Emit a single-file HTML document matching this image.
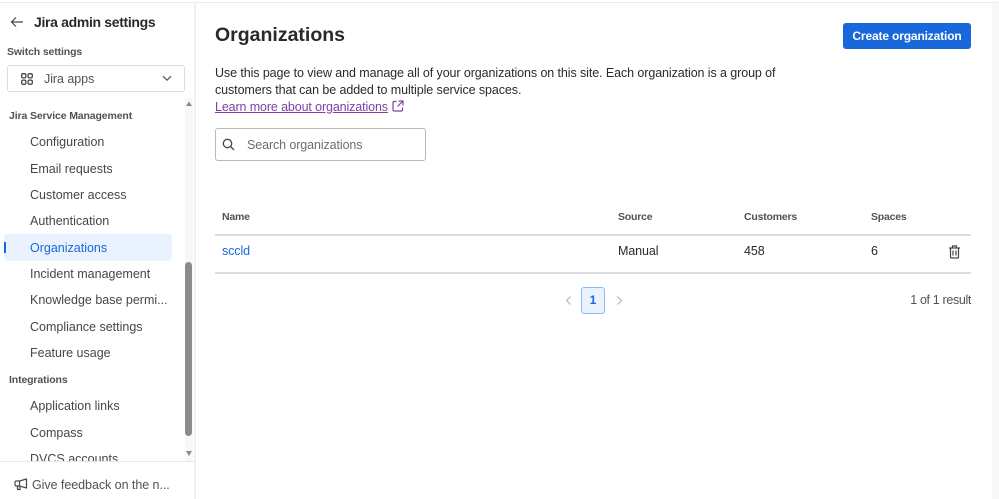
<!DOCTYPE html>
<html><head><meta charset="utf-8">
<style>
html,body{margin:0;padding:0;background:#fff}
#p{position:relative;width:999px;height:499px;overflow:hidden;background:#fff;font-family:"Liberation Sans",sans-serif;color:#292a2e}
.t{position:absolute;white-space:nowrap;font-size:12.5px;line-height:16px}
.n{left:30px;color:#44464c;font-size:12.5px;letter-spacing:0}
.h{color:#505258;font-size:10.5px;font-weight:700;letter-spacing:-.13px}
.th{top:209px;color:#505258;font-size:10.5px;font-weight:700;letter-spacing:-.2px}
.d{top:243px;letter-spacing:-.1px}
.b{position:absolute}
svg{position:absolute;overflow:visible}
</style></head><body><div id="p">
<div class="b" style="left:0;top:2px;width:999px;height:1px;background:#ececee"></div>
<div class="b" style="left:992px;top:3px;width:7px;height:496px;background:#f8f8f8"></div>
<div class="b" style="left:194px;top:3px;width:2px;height:496px;background:#f1f1f3"></div>

<svg style="left:10px;top:15px" width="14" height="14" viewBox="0 0 14 14" fill="none" stroke="#44464c" stroke-width="1.2"><path d="M1.500 7H13M6 2.500 1.500 7 6 11.500"/></svg>
<div class="t" style="left:34px;top:13px;font-size:14px;line-height:18px;font-weight:700;letter-spacing:-.33px;color:#292a2e">Jira admin settings</div>
<div class="t h" style="left:7px;top:44px">Switch settings</div>
<div class="b" style="left:7px;top:65px;width:176px;height:25px;border:1px solid #dcdde0;border-radius:3px"></div>
<svg style="left:21px;top:73px" width="12" height="12" viewBox="0 0 12 12" fill="none" stroke="#44464c" stroke-width="1.300"><rect x=".7" y=".7" width="4.200" height="4.200" rx="1.400"/><rect x="7.100" y=".7" width="4.200" height="4.200" rx="1.400"/><rect x=".7" y="7.100" width="4.200" height="4.200" rx="1.400"/><rect x="7.100" y="7.100" width="4.200" height="4.200" rx="1.400"/></svg>
<div class="t" style="left:44px;top:71px;color:#505258;letter-spacing:-.05px">Jira apps</div>
<svg style="left:162px;top:75px" width="10" height="7" viewBox="0 0 10 7" fill="none" stroke="#505258" stroke-width="1.200"><path d="M1 1.200 5 5.200 9 1.200"/></svg>

<div class="b" style="left:185px;top:98px;width:8px;height:364px;background:#f8f8f8"></div>
<svg style="left:185px;top:100px" width="8" height="6"><path d="M1 6 4 1.500 7 6Z" fill="#8a8a8a"/></svg>
<div class="b" style="left:185px;top:262px;width:7px;height:174px;border-radius:4px;background:#8b8b8b"></div>
<svg style="left:185px;top:451px" width="8" height="6"><path d="M1 0H7L4 5Z" fill="#8a8a8a"/></svg>

<div class="t h" style="left:9px;top:108px">Jira Service Management</div>
<div class="t n" style="top:134px">Configuration</div>
<div class="t n" style="top:161px">Email requests</div>
<div class="t n" style="top:187px">Customer access</div>
<div class="t n" style="top:213px">Authentication</div>
<div class="b" style="left:4px;top:234px;width:168px;height:27px;border-radius:4px;background:#e9f2fe"></div>
<div class="b" style="left:4px;top:242px;width:2px;height:11px;background:#1868db"></div>
<div class="t n" style="top:240px;color:#1868db">Organizations</div>
<div class="t n" style="top:266px">Incident management</div>
<div class="t n" style="top:292px">Knowledge base permi...</div>
<div class="t n" style="top:319px">Compliance settings</div>
<div class="t n" style="top:345px">Feature usage</div>
<div class="t h" style="left:9px;top:372px">Integrations</div>
<div class="t n" style="top:398px">Application links</div>
<div class="t n" style="top:425px">Compass</div>
<div class="b" style="left:0;top:445px;width:185px;height:16px;overflow:hidden"><div class="t n" style="top:6px">DVCS accounts</div></div>
<div class="b" style="left:0;top:461px;width:194px;height:1px;background:#e8e8ea"></div>
<svg style="left:14px;top:478px" width="14" height="13" viewBox="0 0 14 13" fill="none" stroke="#44464c" stroke-width="1.200"><path d="M12.500 1 5.500 3H2.500Q1 3 1 4.500V6.500Q1 8 2.500 8H5.500L12.500 10ZM5.500 3V8M3.500 8V11.500H6V8.500"/></svg>
<div class="t" style="left:32px;top:477px;color:#505258;letter-spacing:-.05px">Give feedback on the n...</div>

<div class="t" style="left:215px;top:22px;font-size:19.500px;line-height:26px;font-weight:700;color:#292a2e">Organizations</div>
<div class="b" style="left:843px;top:23px;width:128px;height:26px;border-radius:3px;background:#1868db"></div>
<div class="t" style="left:843px;top:28px;width:128px;text-align:center;color:#fff;font-weight:700;font-size:12px;letter-spacing:-.15px">Create organization</div>

<div class="t" style="left:215px;top:65px;letter-spacing:-.09px">Use this page to view and manage all of your organizations on this site. Each organization is a group of</div>
<div class="t" style="left:215px;top:82px;letter-spacing:-.09px">customers that can be added to multiple service spaces.</div>
<div class="t" style="left:215px;top:99px;letter-spacing:-.12px;color:#803fa5;text-decoration:underline">Learn more about organizations</div>
<svg style="left:392px;top:100px" width="12" height="12" viewBox="0 0 12 12" fill="none" stroke="#803fa5" stroke-width="1.200"><path d="M4.500 1.500H2.200Q1 1.500 1 2.700V9.800Q1 11 2.200 11H9.300Q10.500 11 10.500 9.800V7.500M6.500 1H11V5.500M11 1 5.500 6.500"/></svg>

<div class="b" style="left:215px;top:128px;width:209px;height:31px;border:1px solid #b7b9be;border-radius:3px"></div>
<svg style="left:222px;top:138px" width="13" height="13" viewBox="0 0 13 13" fill="none" stroke="#44464c" stroke-width="1.300"><circle cx="5.500" cy="5.500" r="4.200"/><path d="M8.600 8.600 12 12"/></svg>
<div class="t" style="left:247px;top:137px;color:#6b6e76;letter-spacing:-.1px">Search organizations</div>

<div class="t th" style="left:222px">Name</div>
<div class="t th" style="left:618px">Source</div>
<div class="t th" style="left:744px">Customers</div>
<div class="t th" style="left:871px">Spaces</div>
<div class="b" style="left:215px;top:234px;width:756px;height:2px;background:#dddee1"></div>
<div class="t d" style="left:222px;color:#1868db">sccld</div>
<div class="t d" style="left:618px">Manual</div>
<div class="t d" style="left:744px">458</div>
<div class="t d" style="left:871px">6</div>
<svg style="left:948px;top:245px" width="13" height="14" viewBox="0 0 13 14" fill="none" stroke="#44464c" stroke-width="1.200"><path d="M1 3H12M4.500 3V1H8.500V3M2.500 3V12Q2.500 13 3.500 13H9.500Q10.500 13 10.500 12V3M5 5.500V10.500M8 5.500V10.500"/></svg>
<div class="b" style="left:215px;top:272px;width:756px;height:2px;background:#dddee1"></div>

<svg style="left:565px;top:296px" width="7" height="9" viewBox="0 0 7 9" fill="none" stroke="#b5b6ba" stroke-width="1.200"><path d="M5.500 .5 1.500 4.500 5.500 8.500"/></svg>
<div class="b" style="left:581px;top:287px;width:22px;height:25px;border:1px solid #8fb8f6;border-radius:3px;background:#e9f2fe"></div>
<div class="t" style="left:581px;top:292px;width:24px;text-align:center;color:#1868db;font-weight:700;font-size:12px">1</div>
<svg style="left:616px;top:296px" width="7" height="9" viewBox="0 0 7 9" fill="none" stroke="#b5b6ba" stroke-width="1.200"><path d="M1.500 .5 5.500 4.500 1.500 8.500"/></svg>
<div class="t" style="right:28px;top:292px;color:#505258;letter-spacing:-.35px">1 of 1 result</div>
</div></body></html>
